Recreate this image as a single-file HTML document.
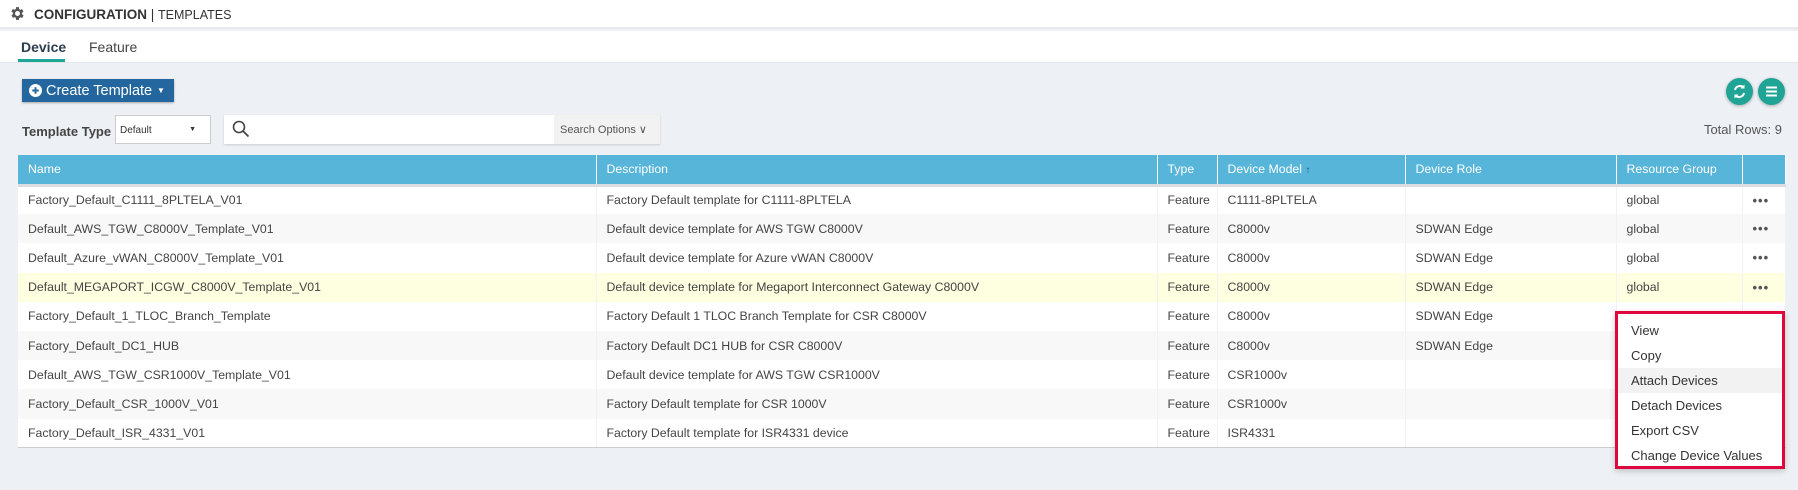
<!DOCTYPE html>
<html><head><style>
*{box-sizing:border-box;margin:0;padding:0}
body{width:1798px;height:490px;background:#edf0f4;font-family:"Liberation Sans",Arial,sans-serif;color:#333;position:relative;overflow:hidden}
.top{position:absolute;left:0;top:0;width:1798px;height:29px;background:#fff;border-bottom:2px solid #e6e8eb}
.title{position:absolute;left:34px;top:7px;font-size:13.5px;color:#333;white-space:nowrap}
.tabs{position:absolute;left:0;top:31px;width:1798px;height:32px;background:#fff;border-bottom:1px solid #e2e5e9}
.tab{position:absolute;top:8px;font-size:14px;color:#444;white-space:nowrap}
.btn{position:absolute;left:22px;top:79px;width:152px;height:23px;background:#23679e;color:#fff;font-size:14.5px;box-shadow:0 1px 2px rgba(0,0,0,.3);white-space:nowrap}
.lbl{position:absolute;left:22px;top:124px;font-size:13px;font-weight:bold;color:#444;white-space:nowrap}
.sel{position:absolute;left:115px;top:115px;width:96px;height:29px;background:#fff;border:1px solid #ccc;font-size:10px;padding:9px 4px;color:#333}
.search{position:absolute;left:224px;top:115px;width:436px;height:29px;background:#fff;box-shadow:0 1px 2px rgba(0,0,0,.15)}
.so{position:absolute;right:0;top:0;width:106px;height:29px;background:#f2f2f2;font-size:11px;color:#555;padding:8px 6px;white-space:nowrap}
.circ{position:absolute;top:78px;width:27px;height:27px;border-radius:50%;background:#1fa496;box-shadow:0 1px 3px rgba(0,0,0,.3)}
.total{position:absolute;right:16px;top:122px;font-size:13px;color:#555}
table{position:absolute;left:18px;top:155px;width:1767px;border-collapse:collapse;font-size:12.3px;table-layout:fixed}
th{background:#56b5d9;color:#fff;font-weight:normal;text-align:left;height:30px;padding:0 10px;border-right:1px solid #fff;border-bottom:3px solid #d9dde2;white-space:nowrap}
td{height:29.2px;padding:0 10px;color:#444;white-space:nowrap;overflow:hidden;border-right:1px solid #f2f2f2}
tr:nth-child(odd) td{background:#fff}
tr:nth-child(even) td{background:#f8f8f8}
tr.hl td{background:#fefee0}
tbody tr:last-child td{border-bottom:1px solid #ccc}
.dots{font-size:13px;letter-spacing:1px;color:#555;font-weight:bold}
.menu{position:absolute;left:1615px;top:311px;width:170px;height:158px;background:#fff;border:3px solid #e0073f;box-shadow:0 2px 6px rgba(0,0,0,.2)}
.mi{position:absolute;left:0;width:164px;height:25px;padding:5px 13px;font-size:13px;color:#333;white-space:nowrap}
</style></head><body>
<div class="top">
<svg style="position:absolute;left:9px;top:5px" width="17" height="17" viewBox="0 0 24 24"><path fill="#555" d="M19.4 13a7.5 7.5 0 000-2l2.1-1.6-2-3.5-2.5 1a7.6 7.6 0 00-1.7-1L15 3h-4l-.4 2.7a7.6 7.6 0 00-1.7 1l-2.5-1-2 3.5L6.6 11a7.5 7.5 0 000 2l-2.1 1.6 2 3.5 2.5-1a7.6 7.6 0 001.7 1L11 21h4l.4-2.7a7.6 7.6 0 001.7-1l2.5 1 2-3.5zM13 15.5a3.5 3.5 0 110-7 3.5 3.5 0 010 7z" transform="translate(-1 0)"/></svg>
<div class="title"><b>CONFIGURATION</b> | <span style="font-size:12.5px">TEMPLATES</span></div>
</div>
<div class="tabs">
<div class="tab" style="left:21px;font-weight:bold;color:#2d3e50">Device</div>
<div style="position:absolute;left:18px;top:28px;width:47px;height:3px;background:#1fa496"></div>
<div class="tab" style="left:89px">Feature</div>
</div>
<div class="btn"><svg style="position:absolute;left:7px;top:5px" width="13" height="13" viewBox="0 0 12 12"><circle cx="6" cy="6" r="6" fill="#fff"/><path d="M6 3v6M3 6h6" stroke="#23679e" stroke-width="1.8"/></svg><span style="position:absolute;left:24px;top:4px">Create Template</span><span style="position:absolute;left:135px;top:7px;font-size:8px">▼</span></div>
<div class="lbl">Template Type</div>
<div class="sel">Default<span style="position:absolute;right:14px;top:10px;font-size:7px">▼</span></div>
<div class="search"><svg style="position:absolute;left:8px;top:5px" width="18" height="18" viewBox="0 0 18 18"><circle cx="7" cy="7" r="5.5" fill="none" stroke="#444" stroke-width="1.6"/><path d="M11 11l5.5 5.5" stroke="#444" stroke-width="1.8"/></svg><div class="so">Search Options &#8744;</div></div>
<div class="circ" style="left:1726px"><svg width="27" height="27" viewBox="0 0 27 27"><path d="M9 12a5 5 0 018.5-2.5M18 15a5 5 0 01-8.5 2.5" fill="none" stroke="#fff" stroke-width="2"/><path d="M18.5 6.5v4h-4zM8.5 20.5v-4h4z" fill="#fff"/></svg></div>
<div class="circ" style="left:1758px"><svg width="27" height="27" viewBox="0 0 27 27"><path d="M8 9.5h11M8 13.5h11M8 17.5h11" stroke="#fff" stroke-width="2"/></svg></div>
<div class="total">Total Rows: 9</div>
<table>
<colgroup><col style="width:578px"><col style="width:561px"><col style="width:60px"><col style="width:188px"><col style="width:211px"><col style="width:126px"><col style="width:43px"></colgroup>
<thead><tr><th>Name</th><th>Description</th><th>Type</th><th>Device Model <span style="font-size:10px;color:#2b5c80">&#8593;</span></th><th>Device Role</th><th>Resource Group</th><th></th></tr></thead>
<tbody>
<tr><td>Factory_Default_C1111_8PLTELA_V01</td><td>Factory Default template for C1111-8PLTELA</td><td>Feature</td><td>C1111-8PLTELA</td><td></td><td>global</td><td class="dots">•••</td></tr>
<tr><td>Default_AWS_TGW_C8000V_Template_V01</td><td>Default device template for AWS TGW C8000V</td><td>Feature</td><td>C8000v</td><td>SDWAN Edge</td><td>global</td><td class="dots">•••</td></tr>
<tr><td>Default_Azure_vWAN_C8000V_Template_V01</td><td>Default device template for Azure vWAN C8000V</td><td>Feature</td><td>C8000v</td><td>SDWAN Edge</td><td>global</td><td class="dots">•••</td></tr>
<tr class="hl"><td>Default_MEGAPORT_ICGW_C8000V_Template_V01</td><td>Default device template for Megaport Interconnect Gateway C8000V</td><td>Feature</td><td>C8000v</td><td>SDWAN Edge</td><td>global</td><td class="dots">•••</td></tr>
<tr><td>Factory_Default_1_TLOC_Branch_Template</td><td>Factory Default 1 TLOC Branch Template for CSR C8000V</td><td>Feature</td><td>C8000v</td><td>SDWAN Edge</td><td></td><td></td></tr>
<tr><td>Factory_Default_DC1_HUB</td><td>Factory Default DC1 HUB for CSR C8000V</td><td>Feature</td><td>C8000v</td><td>SDWAN Edge</td><td></td><td></td></tr>
<tr><td>Default_AWS_TGW_CSR1000V_Template_V01</td><td>Default device template for AWS TGW CSR1000V</td><td>Feature</td><td>CSR1000v</td><td></td><td></td><td></td></tr>
<tr><td>Factory_Default_CSR_1000V_V01</td><td>Factory Default template for CSR 1000V</td><td>Feature</td><td>CSR1000v</td><td></td><td></td><td></td></tr>
<tr><td>Factory_Default_ISR_4331_V01</td><td>Factory Default template for ISR4331 device</td><td>Feature</td><td>ISR4331</td><td></td><td></td><td></td></tr>
</tbody></table>
<div class="menu">
<div class="mi" style="top:4px">View</div>
<div class="mi" style="top:29px">Copy</div>
<div class="mi" style="top:54px;background:#f2f2f2">Attach Devices</div>
<div class="mi" style="top:79px">Detach Devices</div>
<div class="mi" style="top:104px">Export CSV</div>
<div class="mi" style="top:129px">Change Device Values</div>
</div>
</body></html>
